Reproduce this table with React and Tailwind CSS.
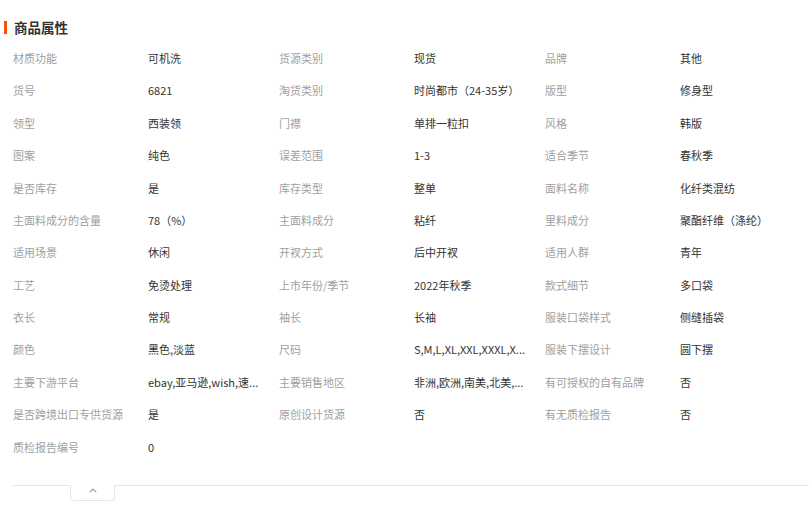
import React from "react";

const rows = [
  ["材质功能", "可机洗", "货源类别", "现货", "品牌", "其他"],
  ["货号", "6821", "淘货类别", "时尚都市（24-35岁）", "版型", "修身型"],
  ["领型", "西装领", "门襟", "单排一粒扣", "风格", "韩版"],
  ["图案", "纯色", "误差范围", "1-3", "适合季节", "春秋季"],
  ["是否库存", "是", "库存类型", "整单", "面料名称", "化纤类混纺"],
  ["主面料成分的含量", "78（%）", "主面料成分", "粘纤", "里料成分", "聚酯纤维（涤纶）"],
  ["适用场景", "休闲", "开衩方式", "后中开衩", "适用人群", "青年"],
  ["工艺", "免烫处理", "上市年份/季节", "2022年秋季", "款式细节", "多口袋"],
  ["衣长", "常规", "袖长", "长袖", "服装口袋样式", "侧缝插袋"],
  ["颜色", "黑色,淡蓝", "尺码", "S,M,L,XL,XXL,XXXL,X...", "服装下摆设计", "圆下摆"],
  ["主要下游平台", "ebay,亚马逊,wish,速...", "主要销售地区", "非洲,欧洲,南美,北美,...", "有可授权的自有品牌", "否"],
  ["是否跨境出口专供货源", "是", "原创设计货源", "否", "有无质检报告", "否"],
  ["质检报告编号", "0", "", "", "", ""],
];

export default function App() {
  return (
    <div
      className="w-[809px] h-[518px] bg-white overflow-hidden"
      style={{ fontFamily: '"Noto Sans CJK SC", "Noto Sans", sans-serif' }}
    >
      <div className="h-[42px] flex items-start pt-[19px]">
        <div className="w-[3px] h-[13px] bg-[#ff5000] ml-[4px] mt-[2px]" />
        <div className="ml-[7px] text-[13.5px] leading-[17px] font-bold text-[#333]">商品属性</div>
      </div>
      <div className="ml-[13px] grid grid-cols-[135px_131px_135px_131px_135px_131px]">
        {rows.map((r, i) =>
          r.map((t, j) => (
            <div
              key={i + "-" + j}
              className={
                "h-[32.4px] flex items-center text-[11px] whitespace-nowrap overflow-hidden " +
                (j % 2 === 0 ? "text-[#a0a0a0]" : "text-[#333]")
              }
            >
              {t}
            </div>
          ))
        )}
      </div>
      <div className="mt-[22px] ml-[13px] border-t border-[#e5e5e5] relative h-[20px]">
        <div className="absolute left-[57px] top-[-1px] w-[45px] h-[16px] bg-white border border-t-0 border-[#e5e5e5] rounded-b-[4px] flex justify-center pt-[3px]">
          <svg width="8" height="5" viewBox="0 0 8 5" fill="none">
            <path d="M0.8 4.2 L4 1 L7.2 4.2" stroke="#999" strokeWidth="1.1" />
          </svg>
        </div>
      </div>
    </div>
  );
}
